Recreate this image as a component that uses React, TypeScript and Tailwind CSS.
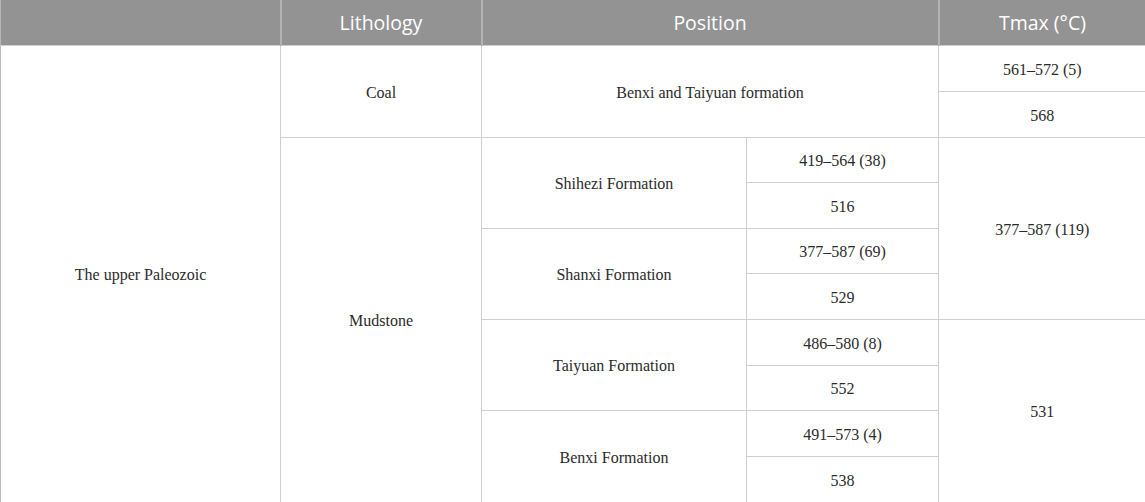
import React from "react";

const td =
  "border border-[#cfcfcf] text-center align-middle text-[16px] leading-[20px] pt-[3px] text-[#2b2b2b] font-['Liberation_Serif',serif] px-0 pb-0";
const th =
  "border-x-2 border-[#b3b3b3] bg-[#939393] text-white text-center align-middle font-['Open_Sans',sans-serif] font-normal text-[19.5px] p-0";

export default function App() {
  const rows = [46, 46, 45, 46, 45, 46, 46, 45, 46, 46];
  return (
    <div className="w-[1145px] h-[502px] overflow-hidden bg-white">
      <table className="w-[1145px] table-fixed border-collapse border-l border-[#b8b8b8]">
        <colgroup>
          <col className="w-[280px]" />
          <col className="w-[201px]" />
          <col className="w-[265px]" />
          <col className="w-[192px]" />
          <col className="w-[207px]" />
        </colgroup>
        <thead>
          <tr className="h-[45px]">
            <th className={th + " border-l-0"}></th>
            <th className={th}>Lithology</th>
            <th className={th} colSpan={2}>
              Position
            </th>
            <th className={th + " border-r-0"}>Tmax (°C)</th>
          </tr>
        </thead>
        <tbody>
          <tr style={{ height: rows[0] }}>
            <td className={td + " border-l-0"} rowSpan={10}>
              The upper Paleozoic
            </td>
            <td className={td} rowSpan={2}>
              Coal
            </td>
            <td className={td} colSpan={2} rowSpan={2}>
              Benxi and Taiyuan formation
            </td>
            <td className={td + " border-r-0"}>561–572 (5)</td>
          </tr>
          <tr style={{ height: rows[1] }}>
            <td className={td + " border-r-0"}>568</td>
          </tr>
          <tr style={{ height: rows[2] }}>
            <td className={td} rowSpan={8}>
              Mudstone
            </td>
            <td className={td} rowSpan={2}>
              Shihezi Formation
            </td>
            <td className={td}>419–564 (38)</td>
            <td className={td + " border-r-0"} rowSpan={4}>
              377–587 (119)
            </td>
          </tr>
          <tr style={{ height: rows[3] }}>
            <td className={td}>516</td>
          </tr>
          <tr style={{ height: rows[4] }}>
            <td className={td} rowSpan={2}>
              Shanxi Formation
            </td>
            <td className={td}>377–587 (69)</td>
          </tr>
          <tr style={{ height: rows[5] }}>
            <td className={td}>529</td>
          </tr>
          <tr style={{ height: rows[6] }}>
            <td className={td} rowSpan={2}>
              Taiyuan Formation
            </td>
            <td className={td}>486–580 (8)</td>
            <td className={td + " border-r-0"} rowSpan={4}>
              531
            </td>
          </tr>
          <tr style={{ height: rows[7] }}>
            <td className={td}>552</td>
          </tr>
          <tr style={{ height: rows[8] }}>
            <td className={td} rowSpan={2}>
              Benxi Formation
            </td>
            <td className={td}>491–573 (4)</td>
          </tr>
          <tr style={{ height: rows[9] }}>
            <td className={td}>538</td>
          </tr>
        </tbody>
      </table>
    </div>
  );
}
